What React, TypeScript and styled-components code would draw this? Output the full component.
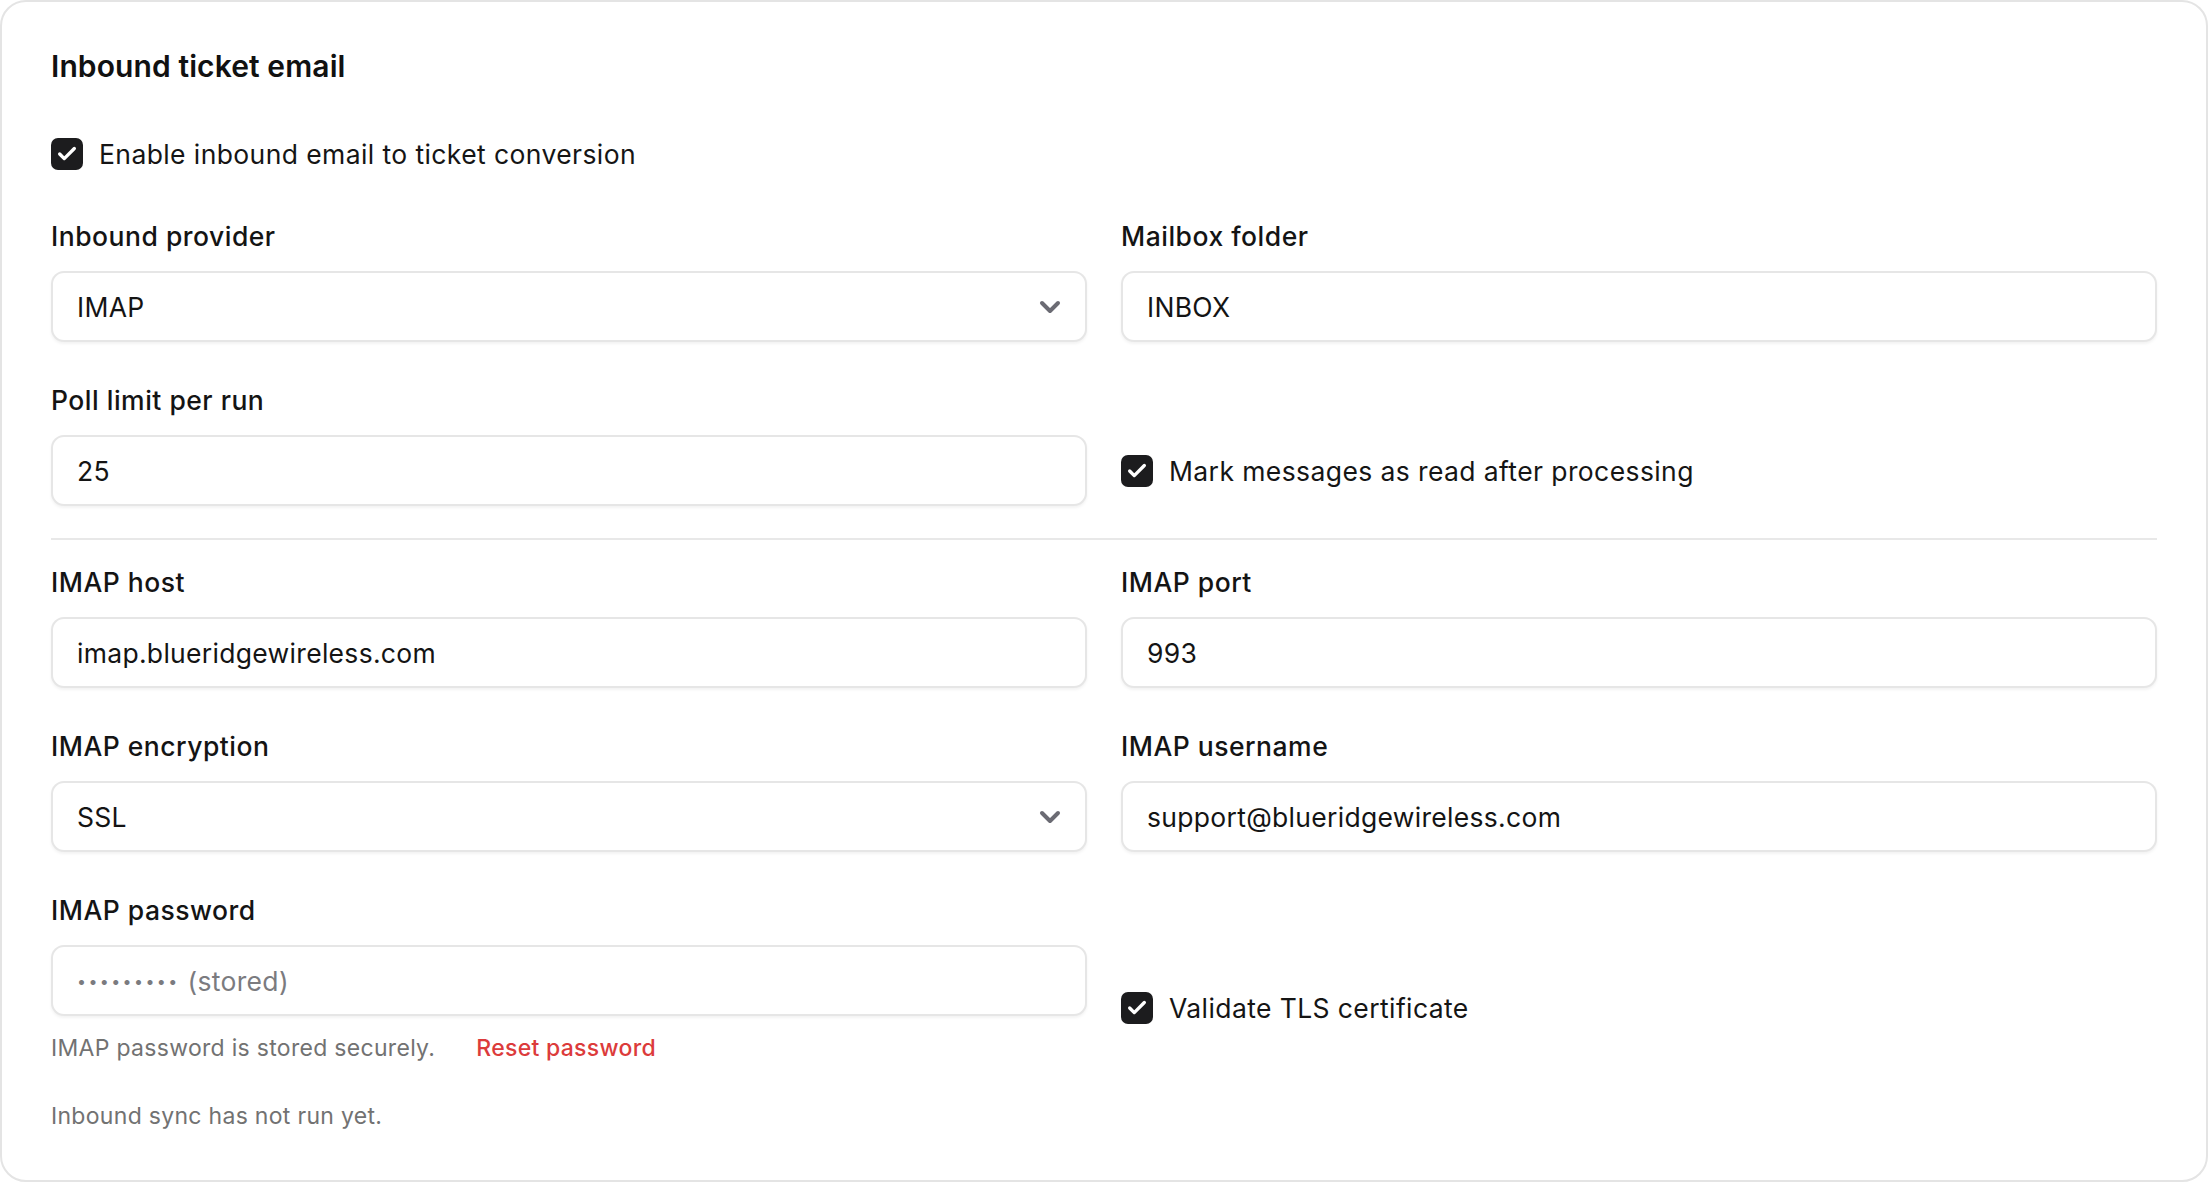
import React from "react";
import styled, {createGlobalStyle} from "styled-components";
import {Check, ChevronDown} from "lucide-react";

const GlobalStyle = createGlobalStyle`
  html, body {
    margin: 0;
    padding: 0;
    background: #ffffff;
  }
  body {
    font-family: Inter, "Noto Sans", "Liberation Sans", sans-serif;
    color: #141414;
    -webkit-font-smoothing: antialiased;
  }
`;

const Card = styled.section`
  box-sizing: border-box;
  width: 2208px;
  min-height: 1181px;
  border: 2px solid #e4e4e4;
  border-radius: 26px;
  padding: 44px 49px 50px 49px;
  display: flex;
  flex-direction: column;
`;

const Title = styled.h2`
  margin: 0;
  font-size: 30px;
  line-height: 40px;
  font-weight: 600;
  letter-spacing: 0.1px;
  color: #111111;
`;

const CheckRow = styled.label<{ $top?: number }>`
  display: flex;
  align-items: center;
  gap: 16px;
  margin-top: ${p => p.$top ?? 0}px;
  font-size: 26.5px;
  line-height: 32px;
  letter-spacing: 0.4px;
  color: #151515;
`;

const Box = styled.span`
  width: 32px;
  height: 32px;
  flex: none;
  border-radius: 7px;
  background: #1c1c1e;
  color: #ffffff;
  display: flex;
  align-items: center;
  justify-content: center;
`;

const Grid = styled.div<{ $top: number }>`
  display: grid;
  grid-template-columns: 1fr 1fr;
  column-gap: 34px;
  row-gap: 43px;
  margin-top: ${p => p.$top}px;
`;

const Field = styled.div`
  display: flex;
  flex-direction: column;
  gap: 20px;
  min-width: 0;
`;

const Label = styled.div`
  font-size: 26.5px;
  line-height: 30px;
  font-weight: 500;
  letter-spacing: 0.5px;
  color: #141414;
`;

const InputBox = styled.div`
  box-sizing: border-box;
  height: 71px;
  border: 2px solid #e6e6e6;
  border-radius: 13px;
  box-shadow: 0 2px 3px rgba(0, 0, 0, 0.05);
  background: #ffffff;
  padding: 0 24px 0 24px;
  display: flex;
  align-items: center;
  justify-content: space-between;
  font-size: 26.5px;
  letter-spacing: 0.3px;
  color: #141414;
`;

const Muted = styled.span`
  color: #7b7b7f;
  display: flex;
  align-items: center;
`;

const Dots = styled.span`
  letter-spacing: 2.4px;
  font-size: 16px;
  margin-right: 8px;
`;

const Chevron = styled(ChevronDown)`
  color: #6b6b73;
  flex: none;
  margin-right: -5px;
`;

const CheckCell = styled.div<{ $pad: number }>`
  padding-top: ${p => p.$pad}px;
`;

const Divider = styled.hr`
  border: none;
  height: 2px;
  background: #e8e8e8;
  margin: 32px 0 0 0;
`;

const HelpRow = styled.div`
  display: flex;
  gap: 41px;
  margin-top: -2px;
  font-size: 23px;
  line-height: 28px;
  letter-spacing: 0.3px;
  color: #727272;
`;

const ResetLink = styled.a`
  color: #dc3b3b;
  font-weight: 500;
  text-decoration: none;
  cursor: pointer;
`;

const Footer = styled.p`
  margin: 40px 0 0 0;
  font-size: 23px;
  line-height: 28px;
  letter-spacing: 0.3px;
  color: #727272;
`;

function CheckBox({label, top}: { label: string, top?: number }) {
    return (
        <CheckRow $top={top}>
            <Box><Check size={22} strokeWidth={3.6}/></Box>
            {label}
        </CheckRow>
    );
}

function TextField({label, value, select, children}: {
    label: string, value?: string, select?: boolean, children?: React.ReactNode
}) {
    return (
        <Field>
            <Label>{label}</Label>
            <InputBox>
                {children ?? <span>{value}</span>}
                {select && <Chevron size={32} strokeWidth={3}/>}
            </InputBox>
        </Field>
    );
}

export default function App() {
    return (
        <>
            <GlobalStyle/>
            <Card>
                <Title>Inbound ticket email</Title>
                <CheckBox top={52} label="Enable inbound email to ticket conversion"/>

                <Grid $top={51}>
                    <TextField label="Inbound provider" value="IMAP" select/>
                    <TextField label="Mailbox folder" value="INBOX"/>
                    <TextField label="Poll limit per run" value="25"/>
                    <CheckCell $pad={70}>
                        <CheckBox label="Mark messages as read after processing"/>
                    </CheckCell>
                </Grid>

                <Divider/>

                <Grid $top={27}>
                    <TextField label="IMAP host" value="imap.blueridgewireless.com"/>
                    <TextField label="IMAP port" value="993"/>
                    <TextField label="IMAP encryption" value="SSL" select/>
                    <TextField label="IMAP username" value="support@blueridgewireless.com"/>
                    <Field>
                        <TextField label="IMAP password">
                            <Muted><Dots>•••••••••</Dots>(stored)</Muted>
                        </TextField>
                        <HelpRow>
                            <span>IMAP password is stored securely.</span>
                            <ResetLink>Reset password</ResetLink>
                        </HelpRow>
                    </Field>
                    <CheckCell $pad={97}>
                        <CheckBox label="Validate TLS certificate"/>
                    </CheckCell>
                </Grid>

                <Footer>Inbound sync has not run yet.</Footer>
            </Card>
        </>
    );
}
